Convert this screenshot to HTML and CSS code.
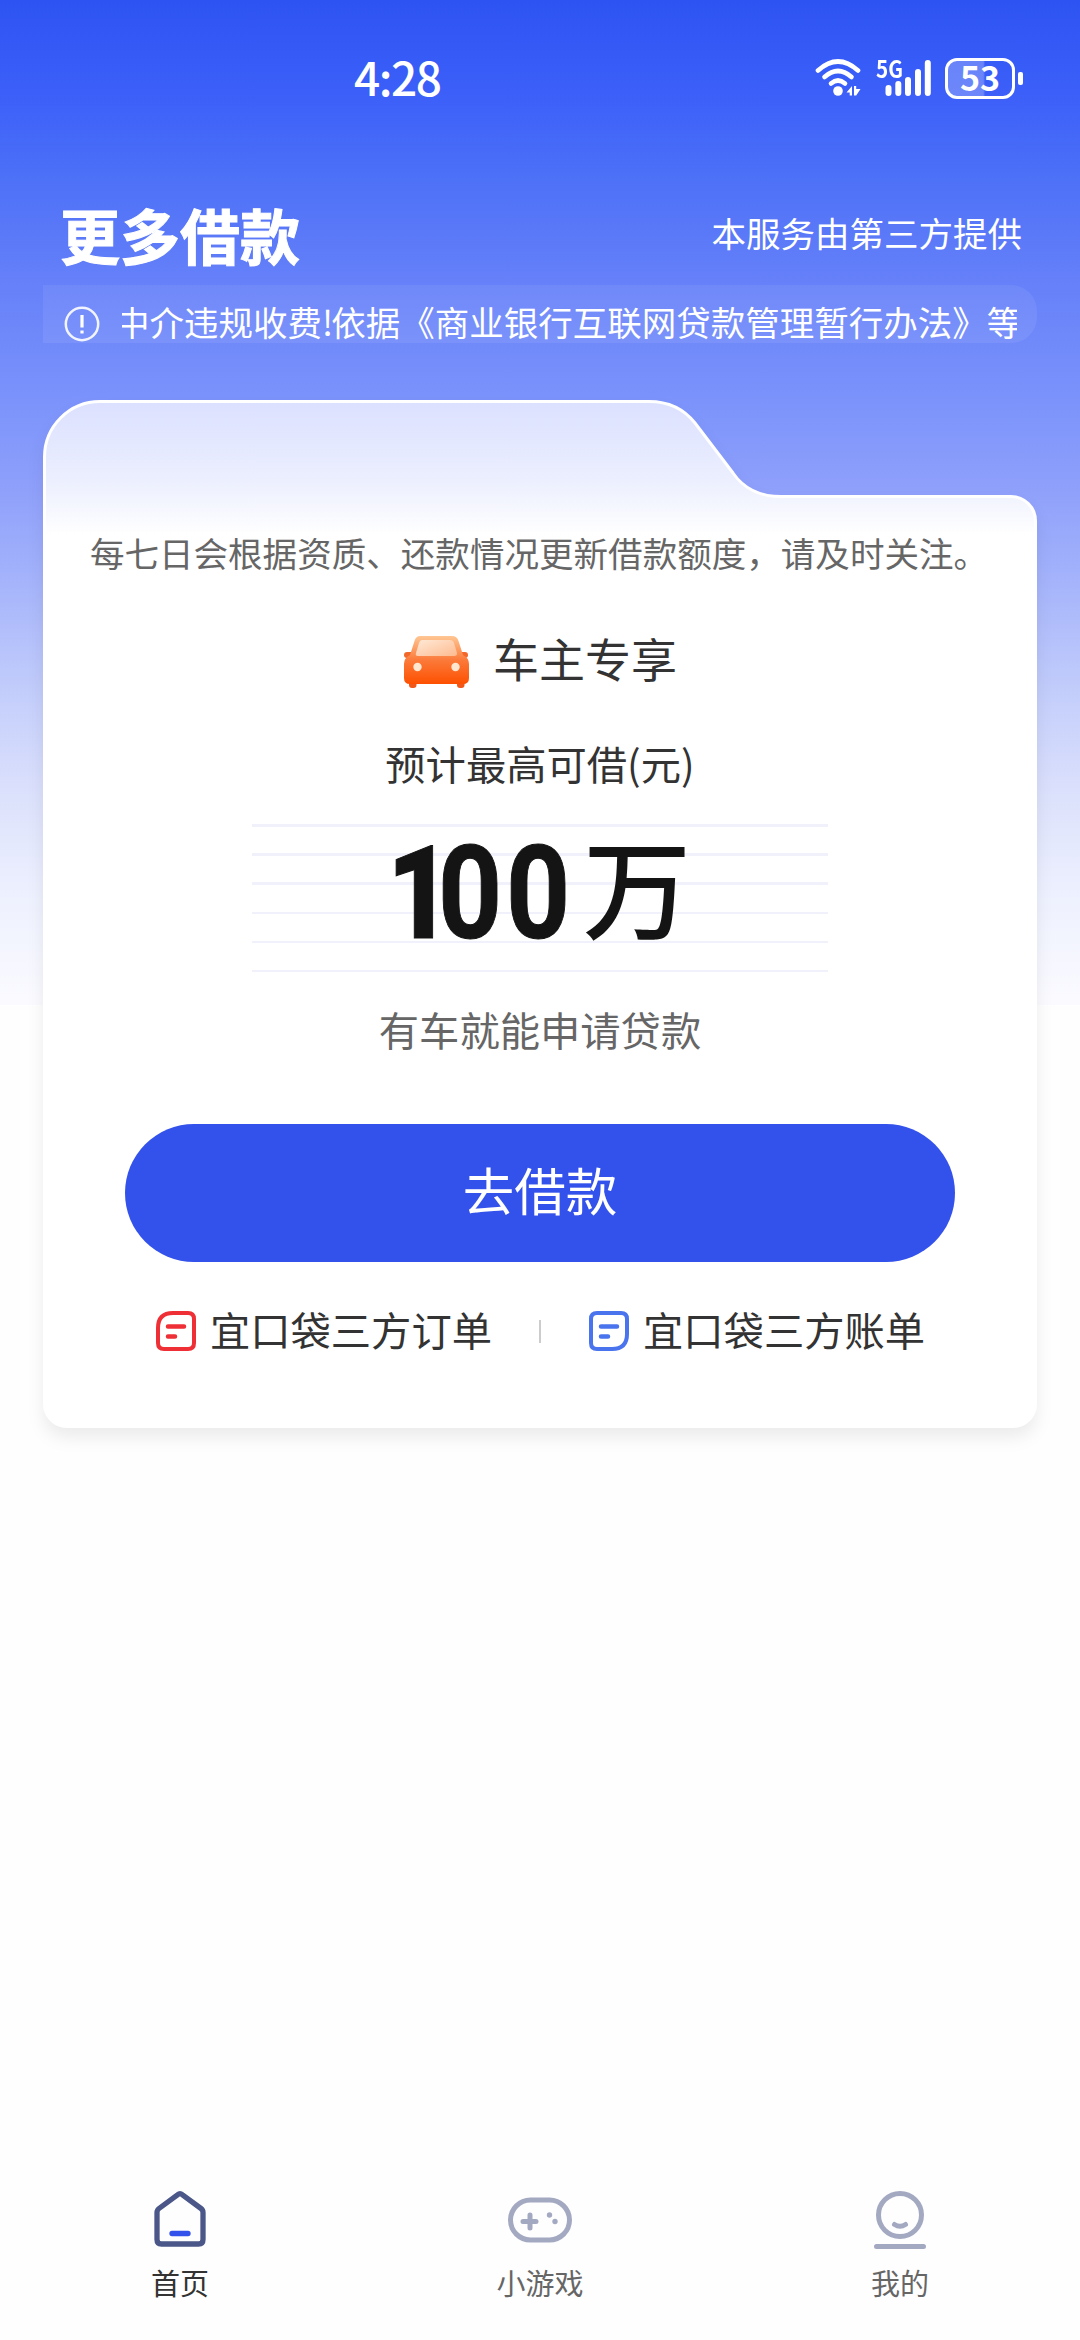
FILE: index.html
```html
<!DOCTYPE html>
<html lang="zh-CN">
<head>
<meta charset="utf-8">
<title>更多借款</title>
<link rel="stylesheet" href="styles.css">
</head>
<body>
<div class="page">
  <header class="status">
    <span class="clock">4:28</span>
    <div class="status-icons">
      <svg class="wifi" viewBox="0 0 50 42" width="50" height="42">
        <g fill="none" stroke="#fff" stroke-width="4.600" stroke-linecap="round">
          <path d="M4 13.500Q24 -4.500 44 13.500"/>
          <path d="M10.500 20Q24 8 37.500 20"/>
          <path d="M17 26.500Q24 20.500 31 26.500"/>
        </g>
        <circle cx="24" cy="34" r="4.800" fill="#fff"/>
        <path d="M38 29V38.500H35.700V35.500H32.500ZM40 29H42.200V32H46.500L42.200 38.500H40Z" fill="#fff"/>
      </svg>
      <div class="signal">
        <span class="net">5G</span>
        <svg viewBox="0 0 54 42" width="54" height="42" stroke="#fff" stroke-width="6" stroke-linecap="round">
          <path d="M10.500 31V36M20.300 27V36M30 23V36M40 15V36M49.800 6V36"/>
        </svg>
      </div>
      <div class="battery"><span>53</span></div>
      <i class="battery-tip"></i>
    </div>
  </header>

  <div class="heading">
    <h1>更多借款</h1>
    <p>本服务由第三方提供</p>
  </div>

  <div class="notice">
    <svg viewBox="0 0 36 36" width="36" height="36" fill="none" stroke="#fff">
      <circle cx="18" cy="18" r="16.200" stroke-width="2.500" opacity=".9"/>
      <path d="M18 9V21.500M18 24.500V27.500" stroke-width="3.200"/>
    </svg>
    <div class="ticker"><span>中介违规收费<b>!</b>依据《商业银行互联网贷款管理暂行办法》等</span></div>
  </div>

  <main class="card">
    <svg class="card-shape" viewBox="0 0 994 1028" width="994" height="1028">
      <defs>
        <linearGradient id="cardFill" x1="0" y1="0" x2="0" y2="135" gradientUnits="userSpaceOnUse">
          <stop offset="0" stop-color="#dbe0ff"/>
          <stop offset=".6" stop-color="#eceffe"/>
          <stop offset="1" stop-color="#fff"/>
        </linearGradient>
      </defs>
      <path d="M1.500 57A55.500 55.500 0 0 1 57 1.500H606Q635 1.500 652 23L690 73Q706 96.500 738 96.500H968A24.500 24.500 0 0 1 992.500 121V1004A22.500 22.500 0 0 1 970 1026.500H24A22.500 22.500 0 0 1 1.500 1004Z" fill="url(#cardFill)" stroke="#fff" stroke-width="3"/>
    </svg>
    <p class="tip">每七日会根据资质、还款情况更新借款额度，请及时关注。</p>
    <div class="product">
      <svg viewBox="0 0 66 54" width="66" height="54">
        <defs>
          <linearGradient id="carBody" x1="0" y1="0" x2="0" y2="1">
            <stop offset="0" stop-color="#ffc794"/>
            <stop offset=".5" stop-color="#fb7a3a"/>
            <stop offset="1" stop-color="#fd5000"/>
          </linearGradient>
          <linearGradient id="carGlass" x1="0" y1="0" x2="1" y2="1">
            <stop offset="0" stop-color="#ffe9d6"/>
            <stop offset="1" stop-color="#fdbb90"/>
          </linearGradient>
        </defs>
        <rect x="6" y="44" width="7.500" height="9" rx="3" fill="#f2571a"/>
        <rect x="54" y="44" width="7.500" height="9" rx="3" fill="#f2571a"/>
        <rect x="1" y="17" width="12" height="6" rx="3" fill="#f2672a"/>
        <rect x="53" y="17" width="12" height="6" rx="3" fill="#f2672a"/>
        <path d="M17 1H49Q54 1 55.500 6L60 20Q66 23 66 29V43Q66 49 60 49H7Q1 49 1 43V29Q1 23 7 20L11.500 6Q13 1 17 1Z" fill="url(#carBody)"/>
        <path d="M19 5H47Q50 5 51 8L54 18Q54.500 21 51 21H15Q12 21 13 18L16 8Q17 5 19 5Z" fill="url(#carGlass)"/>
        <circle cx="14.500" cy="32" r="4.200" fill="#ffe6cf"/>
        <circle cx="52.500" cy="32" r="4.200" fill="#ffe6cf"/>
      </svg>
      <span>车主专享</span>
    </div>
    <p class="label">预计最高可借(元)</p>
    <div class="amount">
      <div class="number"><span class="digits"><b>1</b>00</span></div>
      <span class="unit">万</span>
    </div>
    <p class="desc">有车就能申请贷款</p>
    <button class="apply">去借款</button>
    <nav class="links">
      <a>
        <svg viewBox="0 0 42 42" width="42" height="42" fill="none" stroke="#ee2f35" stroke-width="4" stroke-linecap="round">
          <path d="M18 3H33Q39 3 39 9V33Q39 39 33 39H9Q3 39 3 33V18Q3 3 18 3Z"/>
          <path d="M13 16.500H29M13 26.500H20" stroke-width="4.500"/>
        </svg>
        <span>宜口袋三方订单</span>
      </a>
      <i></i>
      <a>
        <svg viewBox="0 0 42 42" width="42" height="42" fill="none" stroke="#4a74ee" stroke-width="4" stroke-linecap="round">
          <path d="M9 3H33Q39 3 39 9V24Q39 39 24 39H9Q3 39 3 33V9Q3 3 9 3Z"/>
          <path d="M13 16.500H29M13 26.500H20" stroke-width="4.500"/>
        </svg>
        <span>宜口袋三方账单</span>
      </a>
    </nav>
  </main>

  <nav class="tabs">
    <a class="tab active">
      <svg viewBox="0 0 72 72" width="72" height="72" fill="none" stroke="#4a5788" stroke-width="5.300" stroke-linecap="round" stroke-linejoin="round">
        <path d="M33.500 14.800Q36 12.800 38.500 14.800L57 28.500Q59 30 59 32.500V59.500Q59 64 54.500 64H17.500Q13 64 13 59.500V32.500Q13 30 15 28.500Z"/>
        <path d="M28 53.500H44" stroke="#3351eb"/>
      </svg>
      <span>首页</span>
    </a>
    <a class="tab">
      <svg viewBox="0 0 72 72" width="72" height="72" fill="none" stroke="#a4a9c2" stroke-width="5" stroke-linecap="round">
        <rect x="6.500" y="20" width="59" height="40" rx="20"/>
        <path d="M19 41.500H32M26 35V48"/>
        <circle cx="45.500" cy="35" r="2.700" fill="#a4a9c2" stroke="none"/>
        <circle cx="51" cy="41.500" r="2.700" fill="#a4a9c2" stroke="none"/>
      </svg>
      <span>小游戏</span>
    </a>
    <a class="tab">
      <svg viewBox="0 0 72 72" width="72" height="72" fill="none" stroke="#a4a9c2" stroke-width="5" stroke-linecap="round">
        <circle cx="36" cy="35" r="21.500"/>
        <path d="M30.500 44.500Q36 48 41.500 44.500M12.500 66.500H59.500"/>
      </svg>
      <span>我的</span>
    </a>
  </nav>
</div>
</body>
</html>
```
FILE: styles.css
```css
* { box-sizing: border-box; margin: 0; padding: 0; }

body {
  width: 1080px;
  background: #fefefe;
  font-family: "Noto Sans CJK SC", sans-serif;
  color: #333;
}

.page {
  display: flex;
  flex-direction: column;
  height: 2340px;
  background: linear-gradient(180deg, #2d53f2 0, #3d60f9 100px, #4c70f7 175px, #6580f9 280px, #7b93fb 400px, #8fa0fb 490px, #a3b2fb 575px, #c5cffb 700px, #dde2fc 800px, #eef1fe 900px, #fbfbff 1005px, #fefefe 1005px);
}

/* Status bar */
.status {
  display: flex;
  justify-content: space-between;
  height: 156px;
  padding: 57px 57px 0 354px;
  color: #fff;
}
.clock {
  height: 42px;
  margin-top: -2px;
  font-size: 46px;
  font-weight: 500;
  line-height: 42px;
  letter-spacing: -1.500px;
}
.status-icons { display: flex; height: 42px; }
.wifi { margin-right: 11px; }
.signal { position: relative; width: 54px; margin: 0 13px 0 3px; }
.net {
  position: absolute;
  left: -2px;
  top: 0;
  font-size: 24px;
  font-weight: 700;
  line-height: 22px;
  transform: scaleX(.86);
  transform-origin: 0 0;
}
.battery {
  width: 70px;
  height: 41px;
  margin-top: 1px;
  border: 3px solid #fff;
  border-radius: 12px;
  background: linear-gradient(90deg, rgba(255,255,255,.25) 55%, transparent 58%);
  text-align: center;
  font-size: 34px;
  font-weight: 700;
  line-height: 32px;
}
.battery-tip {
  width: 5px;
  height: 13px;
  margin: 15px 0 0 3px;
  border-radius: 2px;
  background: #fff;
}

/* Title row */
.heading {
  display: flex;
  justify-content: space-between;
  align-items: center;
  height: 129px;
  padding: 0 58px 0 60px;
  color: #fff;
}
h1 {
  font-size: 60px;
  font-weight: 700;
  line-height: 80px;
  margin-top: 26px;
  -webkit-text-stroke: 1px #fff;
}
.heading p { font-size: 34.500px; line-height: 50px; margin-top: 22px; }

/* Scrolling notice */
.notice {
  display: flex;
  height: 58px;
  margin: 0 43px 57px;
  padding: 21px 20px 0 21px;
  border-radius: 0 26px 26px 0;
  background: rgba(255,255,255,.07);
  color: #fff;
}
.ticker {
  flex: 1;
  height: 44px;
  margin: -7px 0 0 22px;
  overflow: hidden;
  white-space: nowrap;
  font-size: 34.500px;
  line-height: 44px;
}
.ticker span { margin-left: -7px; }
.ticker b { font-weight: 400; letter-spacing: -2px; }

/* Card */
.card {
  position: relative;
  display: flex;
  flex-direction: column;
  align-items: center;
  width: 994px;
  height: 1028px;
  margin: 0 43px;
}
.card-shape {
  position: absolute;
  left: 0;
  top: 0;
  filter: drop-shadow(0 10px 8px rgba(0,0,0,.07));
}
.card > :not(.card-shape) { position: relative; }
.tip {
  height: 50px;
  margin: 127px 2px 0 0;
  font-size: 34.560px;
  line-height: 50px;
  color: #666;
  white-space: nowrap;
}
.product {
  display: flex;
  align-items: center;
  gap: 24px;
  height: 66px;
  margin-top: 47px;
  font-size: 46px;
  line-height: 66px;
}
.product svg { margin-top: 9px; }
.label {
  margin-top: 43px;
  height: 60px;
  font-size: 40.300px;
  line-height: 60px;
}
.amount {
  display: flex;
  width: 576px;
  height: 149px;
  margin-top: 31px;
  padding-left: 135px;
  background: repeating-linear-gradient(180deg, #f1f1fb 0, #f1f1fb 2.500px, transparent 2.500px, transparent 29.200px);
  color: #141414;
}
.number { width: 196px; }
.digits {
  display: inline-block;
  margin-top: 4px;
  font-family: Roboto, sans-serif;
  font-size: 130px;
  font-weight: 700;
  line-height: 132px;
  letter-spacing: 4.500px;
  transform: scaleX(.86);
  transform-origin: 0 0;
  -webkit-text-stroke: 1px #141414;
}
.digits b { letter-spacing: -16px; }
.unit {
  font-size: 108px;
  font-weight: 500;
  line-height: 121px;
}
.desc {
  height: 60px;
  margin-top: 26px;
  font-size: 40.300px;
  line-height: 60px;
  color: #666;
}
.apply {
  width: 830px;
  height: 138px;
  margin-top: 65px;
  padding-bottom: 10px;
  border: 0;
  border-radius: 69px;
  background: #3351eb;
  color: #fff;
  font-family: inherit;
  font-size: 51.500px;
}
.links {
  display: flex;
  align-items: center;
  justify-content: center;
  height: 60px;
  margin-top: 39px;
  font-size: 40.300px;
  line-height: 60px;
}
.links a { display: flex; align-items: center; gap: 13px; }
.links span { margin-top: -5px; }
.links i { width: 2px; height: 23px; margin: 0 47px; background: #ccc; }

/* Bottom tabs */
.tabs {
  display: grid;
  grid-template-columns: repeat(3, 1fr);
  height: 160px;
  margin-top: auto;
}
.tab {
  display: flex;
  flex-direction: column;
  align-items: center;
  font-size: 29px;
  line-height: 40px;
  color: #666;
}
.tab span { margin-top: 10px; }
.active { color: #333; }
```
